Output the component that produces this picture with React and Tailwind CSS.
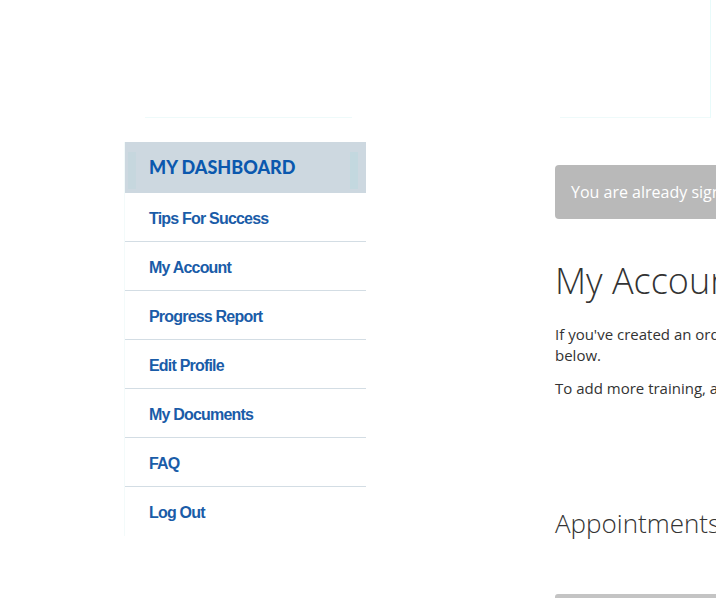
import React from 'react'

const MENU = ['Tips For Success', 'My Account', 'Progress Report', 'Edit Profile', 'My Documents', 'FAQ', 'Log Out']

const App = () => {
  return (
    <div className="w-[716px] h-[598px] overflow-hidden bg-white relative" style={{ fontFamily: '"Open Sans", sans-serif' }}>
      {/* faint top rules */}
      <div className="flex h-[118px]">
        <div className="ml-[145px] w-[207px] self-end border-b border-[#eefafa]" />
        <div className="ml-[208px] w-[150px] self-end border-b border-[#eefafa]" />
        <div className="ml-auto mr-[5px] w-px bg-[#e8fbfb]" />
      </div>

      <div className="flex pl-[124px] pt-[24px]">
        {/* Sidebar */}
        <aside className="w-[242px] shrink-0 self-start border-l border-[#f3fafa]">
          <div className="h-[51px] bg-[#cdd8e0] flex items-center pl-[24px] relative">
            <div className="absolute left-[3px] top-[10px] w-[8px] h-[37px] bg-[#c6d7de]" />
            <div className="absolute right-[8px] top-[10px] w-[8px] h-[37px] bg-[#c3d8df]" />
            <span
              className="relative text-[18px] font-black text-[#0b58ae]"
              style={{ fontFamily: 'Lato, sans-serif' }}
            >
              MY DASHBOARD
            </span>
          </div>
          <ul style={{ fontFamily: '"Liberation Sans", Arial, sans-serif' }}>
            {MENU.map((item, i) => (
              <li
                key={item}
                className={`h-[49px] flex items-center pl-[24px] pt-[3px] text-[16px] font-bold tracking-[-0.8px] text-[#1a5ca8] ${i < MENU.length - 1 ? 'border-b border-[#d3dde4]' : ''}`}
              >
                {item}
              </li>
            ))}
          </ul>
        </aside>

        {/* Main content */}
        <main className="ml-[189px] w-[520px] shrink-0 text-[#333333]">
          <div className="mt-[23px] h-[54px] rounded-[4px] bg-[#b9b9b9] flex items-center pl-[16px] text-[16px] text-white whitespace-nowrap">
            You are already signed in as a registered user.
          </div>
          <h1 className="mt-[40px] text-[36px] font-light leading-[44px] whitespace-nowrap">My Account</h1>
          <p className="mt-[21px] text-[15px] leading-[21px] whitespace-nowrap">
            If you've created an order for training, your upcoming appointments are listed
            <br />
            below.
          </p>
          <p className="mt-[12px] text-[15px] leading-[21px] whitespace-nowrap">
            To add more training, add it to your cart and check out.
          </p>
          <h2 className="mt-[107px] text-[26px] font-light leading-[34px] whitespace-nowrap">Appointments</h2>
          <div className="mt-[54px] h-[6px] rounded-t-[3px] bg-[#c4c4c4]" />
        </main>
      </div>
    </div>
  )
}

export default App
